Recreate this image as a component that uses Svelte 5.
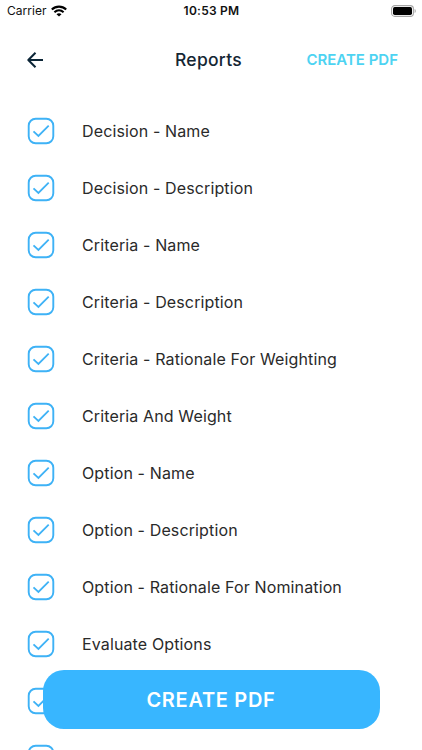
<script>
  const items = [
    'Decision - Name',
    'Decision - Description',
    'Criteria - Name',
    'Criteria - Description',
    'Criteria - Rationale For Weighting',
    'Criteria And Weight',
    'Option - Name',
    'Option - Description',
    'Option - Rationale For Nomination',
    'Evaluate Options',
    '',
    ''
  ];
</script>

<div class="screen">
  <div class="status">
    <div class="carrier">
      <span>Carrier</span>
      <svg width="16" height="12" viewBox="0 0 16 12" fill="none" stroke="#000" stroke-width="2.1">
        <path d="M.8 4.5C4.9.6 11.1.6 15.2 4.5" />
        <path d="M3.4 7.2C6.1 4.8 9.9 4.8 12.6 7.2" />
        <path d="M8 11.6 5.5 9.2C7 7.9 9 7.9 10.5 9.2Z" fill="#000" stroke="none" />
      </svg>
    </div>
    <span class="time">10:53 PM</span>
    <svg class="battery" width="25" height="12" viewBox="0 0 25 12">
      <rect x=".6" y=".6" width="21.8" height="10.8" rx="3.2" fill="#fff" stroke="#a6a6a6" stroke-width="1.1" />
      <rect x="2" y="2" width="19" height="8" rx="1.7" fill="#000" />
      <path d="M23.6 4v4c1.5-.6 1.5-3.4 0-4Z" fill="#a0a0a0" />
    </svg>
  </div>

  <header>
    <button class="back" aria-label="Back">
      <svg width="18" height="18" viewBox="0 0 18 18" fill="none" stroke="#0b2536" stroke-width="2" stroke-linejoin="round">
        <path d="M17 9H2.5M9.5 1.8 2.3 9 9.5 16.2" />
      </svg>
    </button>
    <h1>Reports</h1>
    <button class="action">CREATE PDF</button>
  </header>

  <ul>
    {#each items as label}
      <li>
        <svg width="28" height="28" viewBox="0 0 28 28" fill="none" stroke="#3eb2f6">
          <rect x="1.7" y="1.7" width="24.6" height="24.6" rx="7" stroke-width="1.9" />
          <path d="M6.5 14.4 11.4 19 21.7 8.6" stroke-width="1.8" />
        </svg>
        <span>{label}</span>
      </li>
    {/each}
  </ul>

  <button class="cta">CREATE PDF</button>
</div>

<style>
  .screen {
    position: relative;
    width: 422px;
    height: 750px;
    overflow: hidden;
    background: #fff;
    font-family: Inter, "Liberation Sans", sans-serif;
  }
  button {
    border: 0;
    padding: 0;
    background: none;
    font-family: inherit;
  }
  .status {
    display: grid;
    grid-template-columns: 1fr auto 1fr;
    align-items: center;
    height: 21px;
    padding: 0 6px 0 7px;
    box-sizing: border-box;
    font-size: 12px;
    color: #111;
  }
  .carrier {
    display: flex;
    align-items: center;
    gap: 4.5px;
    letter-spacing: 0.04px;
  }
  .time {
    font-weight: 600;
    font-size: 12px;
    letter-spacing: 0.25px;
  }
  .battery {
    justify-self: end;
  }
  header {
    display: grid;
    grid-template-columns: 1fr auto 1fr;
    align-items: center;
    height: 77px;
    padding: 0 24px 0 26px;
  }
  .back {
    justify-self: start;
    height: 18px;
  }
  h1 {
    margin: 0 7px 0 0;
    font-size: 17.5px;
    font-weight: 500;
    letter-spacing: 0.3px;
    color: #142633;
  }
  .action {
    justify-self: end;
    font-size: 15px;
    font-weight: 600;
    color: #4dd3f2;
    white-space: nowrap;
  }
  ul {
    margin: 0;
    padding: 4.5px 0 0 27px;
    list-style: none;
  }
  li {
    display: flex;
    align-items: center;
    gap: 27px;
    height: 57px;
    font-size: 16px;
    letter-spacing: 0.13px;
    color: #2a2a2a;
    white-space: nowrap;
  }
  .cta {
    position: absolute;
    left: 42.5px;
    top: 670px;
    width: 337px;
    height: 59px;
    border-radius: 21px;
    background: #38b6ff;
    color: #fff;
    font-size: 20px;
    font-weight: 600;
    letter-spacing: 0.7px;
  }
</style>
